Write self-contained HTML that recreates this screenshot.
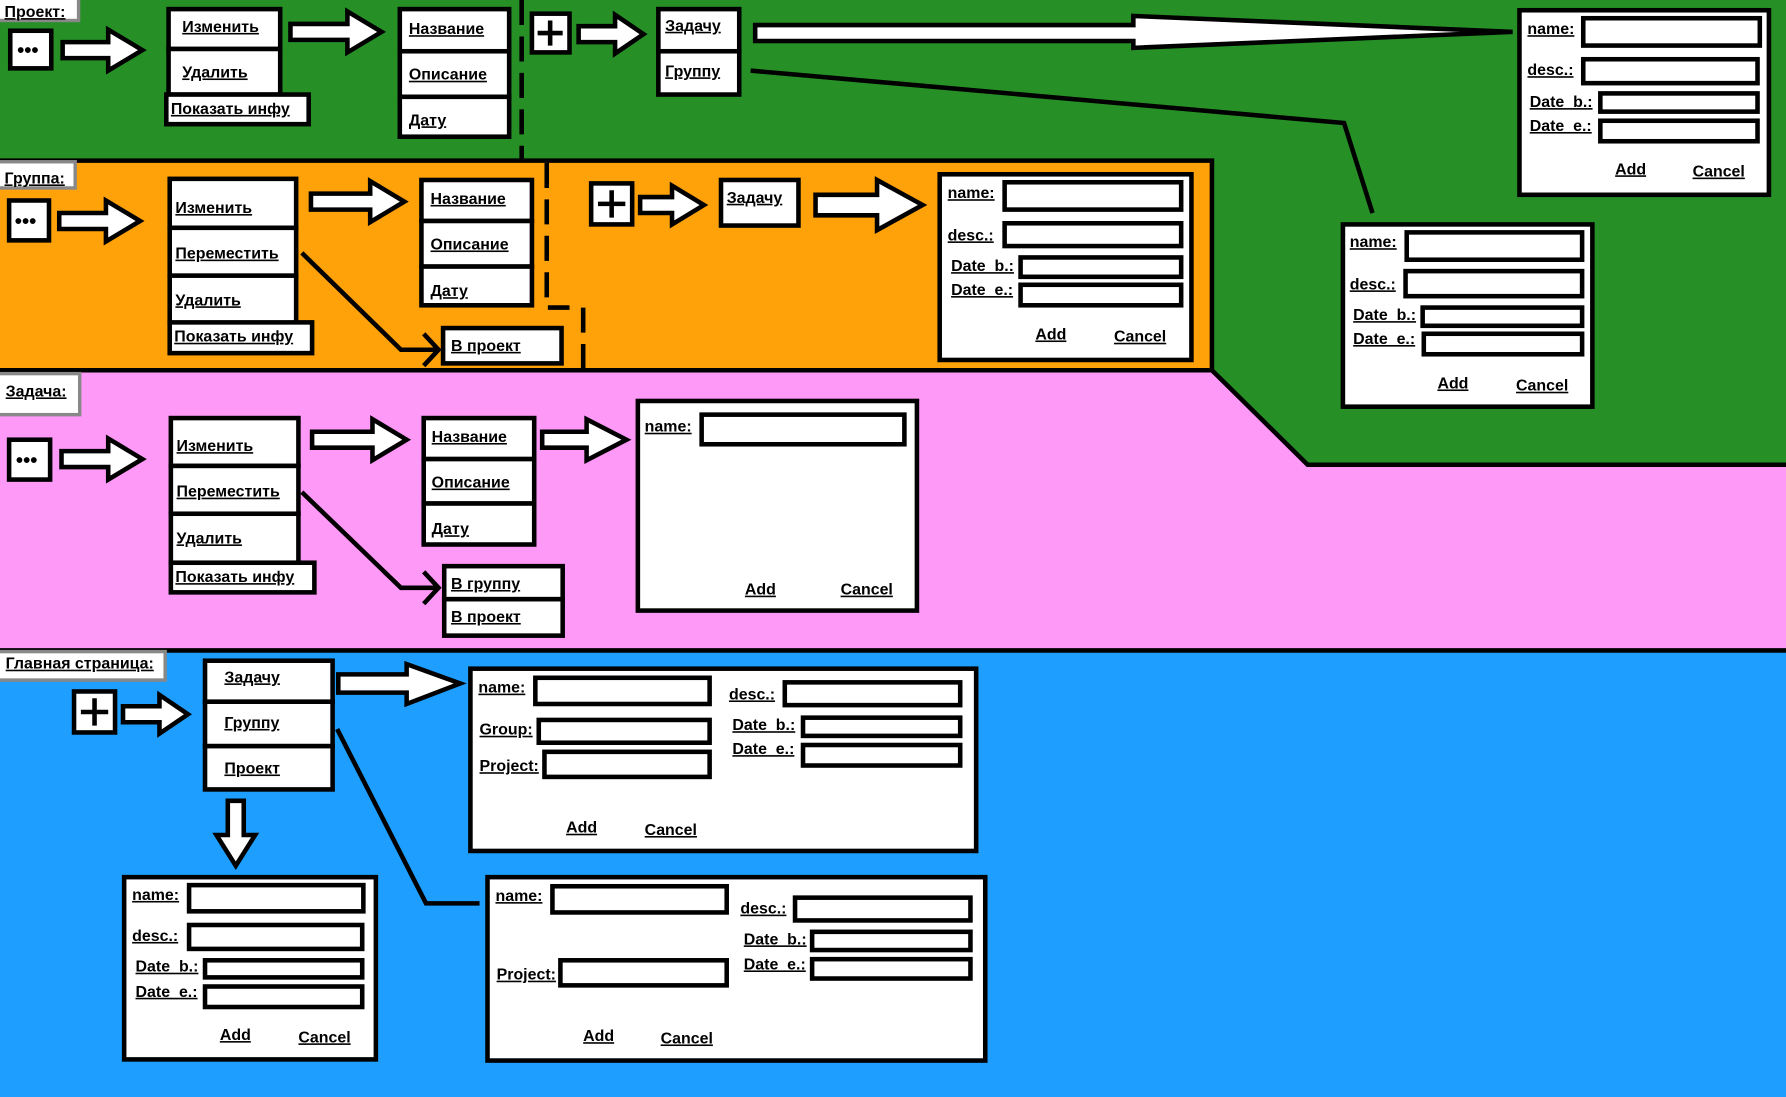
<!DOCTYPE html>
<html><head><meta charset="utf-8"><style>
html,body{margin:0;padding:0;width:1786px;height:1097px;overflow:hidden;background:#1e9fff}
svg{display:block}
text{font-family:"Liberation Sans","DejaVu Sans",sans-serif;font-weight:bold;font-size:14px;text-decoration:underline;fill:#000}
.b{fill:#fff;stroke:#000;stroke-width:4}
.a{fill:#fff;stroke:#000;stroke-width:4;stroke-linejoin:miter}
.l{fill:none;stroke:#000;stroke-width:4}
.d{fill:none;stroke:#000;stroke-width:4;stroke-dasharray:22,10}
.g{fill:#fff;stroke:#888;stroke-width:3}
</style></head><body>
<svg width="1786" height="1097" viewBox="0 0 1568 963" preserveAspectRatio="none">
<!-- backgrounds -->
<rect x="0" y="0" width="1568" height="963" fill="#1e9fff"/>
<rect x="0" y="0" width="1568" height="571" fill="#ff99f8"/>
<polygon points="0,0 1568,0 1568,408 1148,408 1064,325 1064,141 0,141" fill="#268f26"/>
<rect x="0" y="141" width="1064" height="184" fill="#ffa20a"/>
<polyline class="l" points="0,141 1064,141 1064,325 0,325"/>
<polyline class="l" points="1064,325 1148,408 1568,408"/>
<line x1="0" y1="571" x2="1568" y2="571" stroke="#000" stroke-width="4"/>

<!-- labels -->
<rect class="g" x="-3" y="-3" width="72" height="21"/><text x="4" y="15">Проект:</text>
<rect class="g" x="-3" y="142" width="69" height="23"/><text x="4" y="161">Группа:</text>
<rect class="g" x="-3" y="328" width="73" height="36"/><text x="5" y="348">Задача:</text>
<rect class="g" x="-3" y="572" width="148" height="25"/><text x="5" y="587">Главная страница:</text>

<!-- PROJECT ROW -->
<rect class="b" x="9" y="27" width="36" height="33"/><text x="15" y="50" style="text-decoration:none;font-size:18px">•••</text>
<polygon class="a" points="55,37 95,37 95,26 125,44 95,62 95,51 55,51"/>
<rect class="b" x="148" y="8" width="98" height="35"/><text x="160" y="28">Изменить</text>
<rect class="b" x="148" y="43" width="98" height="40"/><text x="160" y="68">Удалить</text>
<rect class="b" x="146" y="83" width="125" height="26"/><text x="150" y="100">Показать инфу</text>
<polygon class="a" points="255,21 305,21 305,10 335,28 305,46 305,35 255,35"/>
<rect class="b" x="351" y="8" width="96" height="37"/><text x="359" y="30">Название</text>
<rect class="b" x="351" y="45" width="96" height="40"/><text x="359" y="70">Описание</text>
<rect class="b" x="351" y="85" width="96" height="35"/><text x="359" y="110">Дату</text>
<line class="d" x1="458" y1="0" x2="458" y2="141"/>
<rect class="b" x="467" y="12" width="33" height="34"/><path class="l" d="M483,18V40M472,29H494"/>
<polygon class="a" points="508,23 540,23 540,13 565,30 540,47 540,37 508,37"/>
<rect class="b" x="578" y="8" width="71" height="37"/><text x="584" y="27">Задачу</text>
<rect class="b" x="578" y="45" width="71" height="38"/><text x="584" y="67">Группу</text>
<polygon class="a" points="663,22 995,22 995,14 1328,28 995,42 995,36 663,36"/>
<polyline class="l" points="659,62 1180,108 1205,187"/>
<!-- form top right -->
<rect class="b" x="1334" y="9" width="219" height="162"/>
<text x="1341" y="30">name:</text><rect class="b" x="1390" y="16" width="155" height="24"/>
<text x="1341" y="66">desc.:</text><rect class="b" x="1390" y="52" width="153" height="21"/>
<text x="1343" y="94">Date_b.:</text><rect class="b" x="1405" y="82" width="138" height="16"/>
<text x="1343" y="115">Date_e.:</text><rect class="b" x="1405" y="106" width="138" height="18"/>
<text x="1418" y="153">Add</text><text x="1486" y="155">Cancel</text>

<!-- GROUP ROW -->
<rect class="b" x="8" y="176" width="35" height="35"/><text x="13" y="200" style="text-decoration:none;font-size:18px">•••</text>
<polygon class="a" points="52,187 93,187 93,176 123,194 93,212 93,201 52,201"/>
<rect class="b" x="149" y="157" width="111" height="43"/><text x="154" y="187">Изменить</text>
<rect class="b" x="149" y="200" width="111" height="42"/><text x="154" y="227">Переместить</text>
<rect class="b" x="149" y="242" width="111" height="42"/><text x="154" y="268">Удалить</text>
<rect class="b" x="149" y="283" width="125" height="27"/><text x="153" y="300">Показать инфу</text>
<polygon class="a" points="273,170 325,170 325,159 355,177 325,195 325,184 273,184"/>
<rect class="b" x="370" y="158" width="97" height="36"/><text x="378" y="179">Название</text>
<rect class="b" x="370" y="194" width="97" height="40"/><text x="378" y="219">Описание</text>
<rect class="b" x="370" y="234" width="97" height="34"/><text x="378" y="260">Дату</text>
<polyline class="d" points="480,143 480,270 500,270"/>
<line class="d" x1="512" y1="270" x2="512" y2="330"/>
<polyline class="l" points="265,222 352,307 385,307"/><polyline class="l" points="372,293 385,307 372,321"/>
<rect class="b" x="389" y="288" width="104" height="31"/><text x="396" y="308">В проект</text>
<rect class="b" x="519" y="161" width="36" height="36"/><path class="l" d="M537,167V191M525,179H549"/>
<polygon class="a" points="562,173 590,173 590,163 618,180 590,197 590,187 562,187"/>
<rect class="b" x="633" y="158" width="68" height="40"/><text x="638" y="178">Задачу</text>
<polygon class="a" points="716,171 770,171 770,158 810,180 770,202 770,189 716,189"/>
<rect class="b" x="825" y="153" width="221" height="163"/>
<text x="832" y="174">name:</text><rect class="b" x="882" y="160" width="155" height="24"/>
<text x="832" y="211">desc.:</text><rect class="b" x="882" y="196" width="155" height="20"/>
<text x="835" y="238">Date_b.:</text><rect class="b" x="896" y="226" width="141" height="17"/>
<text x="835" y="259">Date_e.:</text><rect class="b" x="896" y="250" width="141" height="18"/>
<text x="909" y="298">Add</text><text x="978" y="300">Cancel</text>
<!-- mid right form -->
<rect class="b" x="1179" y="197" width="219" height="160"/>
<text x="1185" y="217">name:</text><rect class="b" x="1235" y="204" width="154" height="24"/>
<text x="1185" y="254">desc.:</text><rect class="b" x="1234" y="238" width="155" height="22"/>
<text x="1188" y="281">Date_b.:</text><rect class="b" x="1249" y="270" width="140" height="16"/>
<text x="1188" y="302">Date_e.:</text><rect class="b" x="1250" y="293" width="139" height="18"/>
<text x="1262" y="341">Add</text><text x="1331" y="343">Cancel</text>

<!-- TASK ROW -->
<rect class="b" x="8" y="386" width="36" height="35"/><text x="14" y="410" style="text-decoration:none;font-size:18px">•••</text>
<polygon class="a" points="54,396 95,396 95,385 125,403 95,421 95,410 54,410"/>
<rect class="b" x="150" y="367" width="112" height="42"/><text x="155" y="396">Изменить</text>
<rect class="b" x="150" y="409" width="112" height="42"/><text x="155" y="436">Переместить</text>
<rect class="b" x="150" y="451" width="112" height="43"/><text x="155" y="477">Удалить</text>
<rect class="b" x="150" y="494" width="126" height="26"/><text x="154" y="511">Показать инфу</text>
<polygon class="a" points="274,379 327,379 327,368 357,386 327,404 327,393 274,393"/>
<rect class="b" x="372" y="367" width="97" height="36"/><text x="379" y="388">Название</text>
<rect class="b" x="372" y="403" width="97" height="39"/><text x="379" y="428">Описание</text>
<rect class="b" x="372" y="442" width="97" height="36"/><text x="379" y="469">Дату</text>
<polygon class="a" points="476,379 515,379 515,368 550,386 515,404 515,393 476,393"/>
<polyline class="l" points="265,432 352,516 385,516"/><polyline class="l" points="372,502 385,516 372,530"/>
<rect class="b" x="390" y="497" width="104" height="29"/><text x="396" y="517">В группу</text>
<rect class="b" x="390" y="526" width="104" height="32"/><text x="396" y="546">В проект</text>
<rect class="b" x="560" y="352" width="245" height="184"/>
<text x="566" y="379">name:</text><rect class="b" x="616" y="364" width="178" height="26"/>
<text x="654" y="522">Add</text><text x="738" y="522">Cancel</text>

<!-- MAIN PAGE -->
<rect class="b" x="65" y="607" width="36" height="36"/><path class="l" d="M83,613V637M71,625H95"/>
<polygon class="a" points="108,620 140,620 140,610 165,627 140,644 140,634 108,634"/>
<rect class="b" x="180" y="580" width="112" height="36"/><text x="197" y="599">Задачу</text>
<rect class="b" x="180" y="616" width="112" height="39"/><text x="197" y="639">Группу</text>
<rect class="b" x="180" y="655" width="112" height="38"/><text x="197" y="679">Проект</text>
<polygon class="a" points="297,592 357,592 357,583 404,600 357,618 357,608 297,608"/>
<polygon class="a" points="200,703 214,703 214,733 224,733 207,760 190,733 200,733"/>
<polyline class="l" points="296,640 374,793 421,793"/>
<!-- Form A -->
<rect class="b" x="413" y="587" width="444" height="160"/>
<text x="420" y="608">name:</text><rect class="b" x="470" y="595" width="153" height="23"/>
<text x="421" y="645">Group:</text><rect class="b" x="473" y="632" width="150" height="20"/>
<text x="421" y="677">Project:</text><rect class="b" x="478" y="660" width="145" height="22"/>
<text x="640" y="614">desc.:</text><rect class="b" x="689" y="599" width="154" height="20"/>
<text x="643" y="641">Date_b.:</text><rect class="b" x="705" y="630" width="138" height="16"/>
<text x="643" y="662">Date_e.:</text><rect class="b" x="705" y="654" width="138" height="18"/>
<text x="497" y="731">Add</text><text x="566" y="733">Cancel</text>
<!-- Form B -->
<rect class="b" x="109" y="770" width="221" height="160"/>
<text x="116" y="790">name:</text><rect class="b" x="166" y="777" width="153" height="23"/>
<text x="116" y="826">desc.:</text><rect class="b" x="166" y="812" width="152" height="21"/>
<text x="119" y="853">Date_b.:</text><rect class="b" x="180" y="843" width="138" height="15"/>
<text x="119" y="875">Date_e.:</text><rect class="b" x="180" y="866" width="138" height="18"/>
<text x="193" y="913">Add</text><text x="262" y="915">Cancel</text>
<!-- Form C -->
<rect class="b" x="428" y="770" width="437" height="161"/>
<text x="435" y="791">name:</text><rect class="b" x="485" y="778" width="153" height="23"/>
<text x="650" y="802">desc.:</text><rect class="b" x="698" y="788" width="154" height="20"/>
<text x="653" y="829">Date_b.:</text><rect class="b" x="713" y="818" width="139" height="16"/>
<text x="653" y="851">Date_e.:</text><rect class="b" x="713" y="842" width="139" height="17"/>
<text x="436" y="860">Project:</text><rect class="b" x="492" y="843" width="146" height="22"/>
<text x="512" y="914">Add</text><text x="580" y="916">Cancel</text>
</svg>
</body></html>
